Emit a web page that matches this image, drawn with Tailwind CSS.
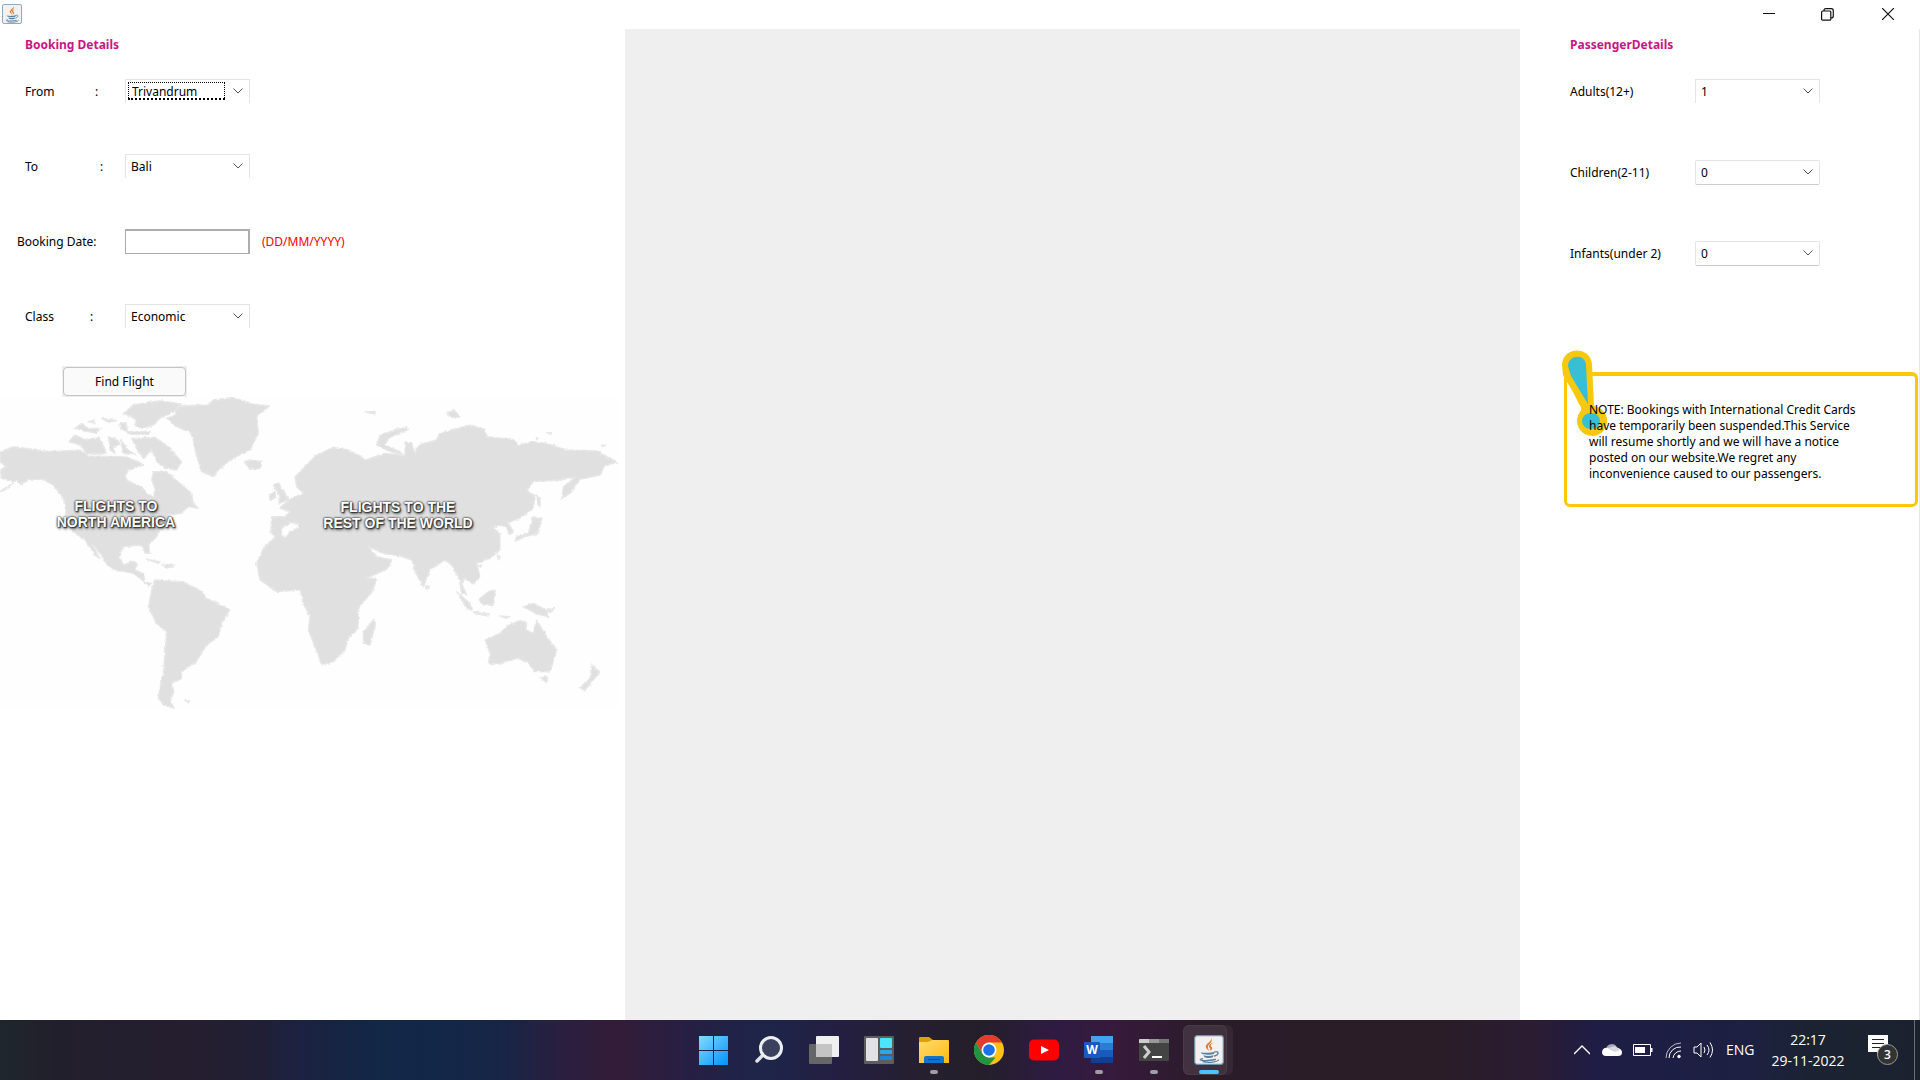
<!DOCTYPE html>
<html lang="en">
<head>
<meta charset="utf-8">
<title>Flight Booking</title>
<script src="https://cdn.jsdelivr.net/npm/@tailwindcss/browser@4"></script>
</head>
<body class="h-screen flex flex-col overflow-hidden bg-white text-black text-[12px] leading-4 font-['Noto_Sans','DejaVu_Sans',sans-serif]">

<svg class="hidden">
  <symbol id="java" viewBox="0 0 30 30">
    <rect x=".7" y=".7" width="28.6" height="28.6" rx="2.5" fill="#f1f1f1" stroke="#6f93ac" stroke-width="1.2"/>
    <path d="M17 3C18.500 7 9 9 12.500 13.500L15 16C14 12.500 13 11.500 15.500 9 17.500 7 18.500 6 17 3ZM20 7.500C14.500 9 14 11.500 16 13.200 16.700 14 16.500 15 15.500 16 20.500 14 17.500 12 16.800 11.200 16.200 10 18 8.500 20 7.500Z" fill="#e67a2e"/>
    <path d="M7 17C7.500 18.200 17 18 20.500 17L20 19C16 20 9 20 7.500 18.500ZM9.500 20.300C12 21.300 16 21.300 19.500 20.300L18.500 22.500C16 23.200 12 23.200 10.500 22.200Z" fill="#5b7f9d"/>
    <path d="M20.500 17C25.500 15.500 25 19.800 20.500 21M8.500 23.600C2 25 10 26.700 21.500 24.500M9 26.700C15 28 23 27.200 24.500 25" fill="none" stroke="#5b7f9d" stroke-width="1.300" stroke-linecap="round"/>
  </symbol>
  <symbol id="chev" viewBox="0 0 10 6"><path d="M.5.5 5 5 9.500.5" fill="none" stroke="#555" stroke-width="1"/></symbol>
</svg>

<header class="h-[29px] shrink-0 flex items-start justify-between">
  <svg class="w-5 h-5 mt-1 ml-0.5"><use href="#java"/></svg>
  <div class="flex h-7">
    <button aria-label="Minimize" class="w-[58px] grid place-items-center"><svg width="12" height="12"><path d="M0 5.500H12" stroke="#111"/></svg></button>
    <button aria-label="Restore" class="w-[58px] grid place-items-center"><svg width="13" height="13" fill="none" stroke="#111" stroke-width="1.200"><rect x=".6" y="3" width="9.200" height="9.200" rx="1"/><path d="M3 3V2Q3 .6 5 .6H10.400Q12.300.6 12.300 3V8Q12.300 10 10 10"/></svg></button>
    <button aria-label="Close" class="w-16 grid place-items-center"><svg width="12" height="12"><path d="M0 0 12 12M12 0 0 12" stroke="#111" stroke-width="1.200"/></svg></button>
  </div>
</header>

<main class="flex-1 min-h-0 grid grid-cols-[625px_1fr_400px]">
  <section>
    <form>
      <h2 class="font-bold text-[#c71585] pt-2 pl-[25px]">Booking Details</h2>
      <div class="pt-[26px] grid gap-y-[50px]">
        <div class="flex h-[25px] items-center">
          <label for="from" class="w-[125px] pl-[25px] flex"><span class="w-[70px]">From</span>:</label>
          <div class="relative w-[125px] h-6 self-start border border-b-0 border-[#e5e5e5]">
            <select id="from" class="appearance-none block w-full h-full pl-[6px] outline-none"><option>Trivandrum</option></select>
            <span class="absolute left-0.5 top-0.5 w-[97px] h-[18px] border border-b-2 border-dotted border-black pointer-events-none"></span>
            <svg class="absolute right-[6px] top-2 w-[10px] h-[6px] pointer-events-none"><use href="#chev"/></svg>
          </div>
        </div>
        <div class="flex h-[25px] items-center">
          <label for="to" class="w-[125px] pl-[25px] flex"><span class="w-[75px]">To</span>:</label>
          <div class="relative w-[125px] h-6 self-start border border-b-0 border-[#e5e5e5]">
            <select id="to" class="appearance-none block w-full h-full pl-[5px] outline-none"><option>Bali</option></select>
            <svg class="absolute right-[6px] top-2 w-[10px] h-[6px] pointer-events-none"><use href="#chev"/></svg>
          </div>
        </div>
        <div class="flex h-[25px] items-center">
          <label for="date" class="w-[125px] pl-[17px]">Booking Date:</label>
          <input id="date" type="text" class="w-[125px] h-[25px] border border-t-2 border-r-2 border-[#abadb3] px-1 outline-none">
          <span class="pl-3 text-[#ff0000]">(DD/MM/YYYY)</span>
        </div>
        <div class="flex h-[25px] items-center">
          <label for="class" class="w-[125px] pl-[25px] flex"><span class="w-[65px]">Class</span>:</label>
          <div class="relative w-[125px] h-6 self-start border border-b-0 border-[#e5e5e5]">
            <select id="class" class="appearance-none block w-full h-full pl-[5px] outline-none"><option>Economic</option></select>
            <svg class="absolute right-[6px] top-2 w-[10px] h-[6px] pointer-events-none"><use href="#chev"/></svg>
          </div>
        </div>
      </div>
      <div class="mt-[37px] ml-[62px] w-[125px] h-[31px] p-px bg-[#eee]">
        <button type="button" class="block w-full h-full rounded border border-[#c4c4c4] bg-[#fafafa]">Find Flight</button>
      </div>
    </form>
    <div class="relative w-[618px] h-[313px] bg-[#fefefe] font-bold text-sm leading-4 text-white text-center font-['Liberation_Sans',sans-serif]">
      <svg class="block w-full h-full" viewBox="0 21 1854 939" fill="#e0e0e0" stroke="#e8e8e8" stroke-width="4" stroke-linejoin="round">
        <filter id="coast" x="0" y="0" width="100%" height="100%"><feTurbulence type="fractalNoise" baseFrequency=".1" numOctaves="2" seed="4"/><feDisplacementMap in="SourceGraphic" scale="9" xChannelSelector="R" yChannelSelector="G"/></filter>
        <g filter="url(#coast)">
        <path d="M0 185 40 170 150 185 240 180 265 198 375 200 415 215 430 225 385 240 375 260 385 275 425 290 440 310 460 320 465 295 455 270 460 245 500 245 545 285 575 310 580 340 595 355 565 350 545 370 500 375 520 385 480 410 470 440 445 465 450 490 435 490 425 465 370 470 358 500 370 525 395 515 412 520 405 540 430 550 435 575 455 580 445 588 420 565 400 550 340 538 318 520 300 490 275 460 300 505 285 495 255 450 220 425 200 380 190 325 160 285 130 268 85 268 60 285 50 270 15 300 0 305 30 285 40 275 5 265 0 240 18 230 0 215Z"/>
        <path d="M465 570 550 575 605 605 620 625 690 658 665 700 655 740 620 765 590 815 545 845 545 865 515 880 522 905 510 935 525 955 490 945 475 925 480 890 490 850 500 725 468 700 445 650 455 600Z"/>
        <path d="M500 85 525 75 530 48 625 45 640 30 700 22 755 42 808 48 770 80 775 130 750 180 690 210 655 240 640 260 605 245 590 200 575 130 530 110Z"/>
        <path d="M370 70 400 45 480 32 545 42 520 65 480 85 460 105 430 115 408 110 405 85ZM395 145 465 142 500 165 545 215 530 240 500 235 470 215 455 180 430 205 410 175ZM205 155 225 135 255 148 300 143 320 190 260 192 240 165ZM225 115 245 100 265 115 300 115 290 130 250 122ZM325 140 355 150 360 165 340 170 345 190 330 180ZM362 150 385 180 410 195 370 190ZM305 85 350 92 325 98ZM380 125 450 125 445 133 385 133ZM265 95 285 90 285 100ZM360 100 378 98 383 125 362 118Z"/>
        <path d="M733 215 750 210 785 215 780 235 750 238ZM820 285 835 278 855 310 865 330 835 342 840 320ZM808 315 825 305 828 325 810 330ZM440 508 480 515 475 520ZM485 522 525 526 500 535ZM555 930 568 932 565 938Z"/>
        <path d="M840 355 865 330 910 310 890 290 885 260 950 195 1000 172 1040 178 1085 200 1095 210 1155 190 1215 195 1215 155 1235 160 1245 190 1255 165 1310 150 1320 130 1410 105 1455 118 1460 140 1540 148 1555 165 1600 155 1640 160 1700 180 1790 183 1854 218 1815 225 1800 255 1740 268 1710 310 1685 328 1690 290 1725 262 1680 270 1600 275 1582 300 1605 320 1600 355 1560 385 1525 398 1540 425 1530 435 1518 410 1495 405 1480 415 1500 430 1500 480 1470 505 1430 520 1440 560 1420 582 1395 565 1385 580 1400 615 1385 610 1378 570 1355 525 1335 510 1290 540 1270 590 1245 545 1235 510 1200 498 1150 490 1105 470 1130 500 1175 510 1165 535 1100 565 1130 565 1120 600 1075 655 1075 715 1045 745 1035 780 1000 815 965 825 955 795 925 720 930 680 910 640 900 600 830 605 780 570 770 520 790 475 825 440 812 425 815 380 855 380 870 365ZM845 415 870 398 895 400 895 415 870 425 860 440 845 438Z" fill-rule="evenodd"/>
        <path d="M1090 760 1090 725 1120 690 1127 700 1110 765ZM1130 165 1140 135 1220 110 1225 118 1165 145 1155 165 1200 185 1215 198 1160 180ZM1340 70 1360 58 1382 82 1355 82ZM1095 66 1125 64 1125 72ZM1610 315 1620 330 1620 350 1614 345ZM1640 128 1655 128 1652 132ZM1605 143 1615 145 1610 148ZM1805 165 1816 167 1810 170ZM1600 380 1625 385 1615 430 1575 440 1545 455 1550 440 1585 430ZM1275 585 1288 590 1282 600ZM1370 605 1410 640 1415 662 1400 655ZM1435 630 1465 605 1485 600 1480 645 1450 645ZM1420 665 1468 672 1465 678 1425 670ZM1570 650 1600 640 1640 660 1645 680 1610 672ZM1500 678 1530 680 1515 685ZM1492 495 1500 500 1495 512ZM1435 527 1445 525 1440 532ZM1640 660 1665 655 1650 668Z"/>
        <path d="M1455 750 1500 730 1525 705 1560 692 1580 700 1578 720 1600 730 1610 690 1640 740 1670 780 1650 845 1605 845 1580 815 1550 805 1500 822 1465 820 1470 790ZM1620 862 1642 860 1640 878ZM1775 825 1800 845 1780 870 1755 900 1740 895 1770 865Z"/>
        </g>
      </svg>
      <a href="#north-america" class="absolute left-[55px] top-[101px] w-[122px] [text-shadow:0_0_2px_#222,0_0_2px_#333,1px_1px_1px_#444,1px_2px_3px_#555]">FLIGHTS TO<br>NORTH AMERICA</a>
      <a href="#world" class="absolute left-[317px] top-[102px] w-[162px] [text-shadow:0_0_2px_#222,0_0_2px_#333,1px_1px_1px_#444,1px_2px_3px_#555]">FLIGHTS TO THE<br>REST OF THE WORLD</a>
    </div>
  </section>

  <section class="bg-[#efefef]" aria-label="Flights"></section>

  <section class="border-r border-[#e8e8e8]">
    <h2 class="font-bold text-[#c71585] pt-2 pl-[50px]">PassengerDetails</h2>
    <div class="pt-[26px] pl-[50px] grid gap-y-14">
      <div class="flex h-[25px] items-center">
        <label for="adults" class="w-[125px]">Adults(12+)</label>
        <div class="relative w-[125px] h-6 self-start border border-b-0 border-[#e5e5e5]">
          <select id="adults" class="appearance-none block w-full h-full pl-[5px] outline-none"><option>1</option></select>
          <svg class="absolute right-[6px] top-2 w-[10px] h-[6px] pointer-events-none"><use href="#chev"/></svg>
        </div>
      </div>
      <div class="flex h-[25px] items-center">
        <label for="children" class="w-[125px]">Children(2-11)</label>
        <div class="relative w-[125px] h-[25px] rounded-[2px] border border-[#e5e5e5] border-b-[#ccc]">
          <select id="children" class="appearance-none block w-full h-full pl-[5px] outline-none"><option>0</option></select>
          <svg class="absolute right-[6px] top-2 w-[10px] h-[6px] pointer-events-none"><use href="#chev"/></svg>
        </div>
      </div>
      <div class="flex h-[25px] items-center">
        <label for="infants" class="w-[125px]">Infants(under 2)</label>
        <div class="relative w-[125px] h-[25px] rounded-[2px] border border-[#e5e5e5] border-b-[#ccc]">
          <select id="infants" class="appearance-none block w-full h-full pl-[5px] outline-none"><option>0</option></select>
          <svg class="absolute right-[6px] top-2 w-[10px] h-[6px] pointer-events-none"><use href="#chev"/></svg>
        </div>
      </div>
    </div>
    <aside class="relative mt-[106px] ml-[44px] mr-px h-[135px] rounded-md border-[3px] border-t-4 border-[#f7c80c] pt-[26px] pl-[22px]">
      <svg class="absolute -left-1.5 -top-[26px] w-[46px] h-[87px]" viewBox="0 0 46 87">
        <path d="M1 15C2-4 29-4 31 14L33 56A15 15 0 1 1 19 62Q22 58 18 54L12 42 2 25Z" fill="#f7c80c"/>
        <path d="M7 16C7 5 24 3 25 15L27 54 10 26Z" fill="#38bfd5"/>
        <ellipse cx="30" cy="71" rx="9" ry="8" fill="#38bfd5"/>
      </svg>
      <p class="relative">NOTE: Bookings with International Credit Cards<br>have temporarily been suspended.This Service<br>will resume shortly and we will have a notice<br>posted on our website.We regret any<br>inconvenience caused to our passengers.</p>
    </aside>
  </section>
</main>

<footer class="relative h-[60px] shrink-0 flex justify-center text-white font-['Open_Sans',sans-serif] bg-[linear-gradient(90deg,#1e262d_0%,#221f2c_3%,#241e2f_10%,#211f35_13.5%,#1e2140_15%,#132645_19%,#122748_22%,#162546_26%,#291f40_29%,#331c38_32%,#252045_36.5%,#1d2549_40%,#241f42_43.5%,#251f2f_48%,#231f2a_51%,#2f1b42_55%,#371a3c_58%,#2a1c28_63%,#2a1d27_75%,#2b1c33_80%,#1f1d45_83%,#1d2042_91%,#1b2333_94%,#1b222e_100%)]">
  <nav class="flex pl-0.5">
    <button aria-label="Start" class="w-[55px] grid place-items-center"><svg width="30" height="30"><defs><linearGradient id="wg" gradientUnits="userSpaceOnUse" x1="0" y1="0" x2="30" y2="30"><stop offset="0" stop-color="#83dcff"/><stop offset="1" stop-color="#0091fa"/></linearGradient></defs><path d="M0 1H14V15H0ZM15 1H29V15H15ZM0 16H14V30H0ZM15 16H29V30H15Z" fill="url(#wg)"/></svg></button>
    <button aria-label="Search" class="w-[55px] grid place-items-center"><svg width="30" height="30" fill="none"><path d="M9 20 3 26" stroke="#dfe3e6" stroke-width="3.500" stroke-linecap="round"/><circle cx="17" cy="13" r="10.500" fill="#3d4160" stroke="#eceff1" stroke-width="3"/></svg></button>
    <button aria-label="Task view" class="w-[55px] grid place-items-center"><svg width="30" height="30"><rect y="9" width="23" height="20" rx="1" fill="#666"/><rect x="7" y="1" width="23" height="21" rx="1" fill="#f0f0f0"/><rect x="7" y="9" width="16" height="13" fill="#c4c4c4"/></svg></button>
    <button aria-label="Widgets" class="w-[55px] grid place-items-center"><svg width="30" height="30"><rect y="1" width="30" height="28" rx="1" fill="#5d5d5d"/><rect x="2" y="3" width="12" height="23" rx="1" fill="#e2e2e6"/><rect x="16" y="3" width="12" height="10" rx="1" fill="#4de4ff"/><rect x="16" y="15" width="12" height="4" rx="1" fill="#29a9e8"/><rect x="16" y="21" width="12" height="4" rx="1" fill="#1c86d8"/></svg></button>
    <button aria-label="File Explorer" class="relative w-[55px] grid place-items-center"><svg width="30" height="30"><defs><linearGradient id="fg" x1="0" y1="0" x2="1" y2="1"><stop offset="0" stop-color="#ffdd6c"/><stop offset="1" stop-color="#fdb913"/></linearGradient></defs><path d="M0 3Q0 2 1 2H10L14 5V10H0Z" fill="#dfa00b"/><path d="M0 7H9L13 5H29Q30 5 30 6V28H0Z" fill="url(#fg)"/><path d="M5 28V23Q5 21 7 21H23Q25 21 25 23V28Z" fill="#1173cb"/><path d="M9 24.500H21" stroke="#0b4f96"/></svg><span class="absolute bottom-1.5 w-2 h-1 rounded-full bg-[#a09ca6]"></span></button>
    <button aria-label="Chrome" class="w-[55px] grid place-items-center"><svg width="30" height="30" viewBox="0 0 30 30"><circle cx="15" cy="15" r="15" fill="#fbc116"/><path d="M15 15 8.500 18.700 2 7.500A15 15 0 0 1 28 7.500H15Z" fill="#e33b2e"/><path d="M2 7.500 8.500 18.700 15 22.500H21.500L15 30A15 15 0 0 1 2 7.500Z" fill="#229342"/><circle cx="15" cy="15" r="7.500" fill="#fff"/><circle cx="15" cy="15" r="5.800" fill="#1a73e8"/></svg></button>
    <button aria-label="YouTube" class="w-[55px] grid place-items-center"><svg width="30" height="22"><rect width="30" height="21" y=".5" rx="5" fill="#f00"/><path d="M12 7 20 11 12 15Z" fill="#fff"/></svg></button>
    <button aria-label="Word" class="relative w-[55px] grid place-items-center"><svg width="30" height="30"><path d="M7 1H29V8H7Z" fill="#41a5ee"/><path d="M7 8H29V15H7Z" fill="#2b7cd3"/><path d="M7 15H29V22H7Z" fill="#185abd"/><path d="M7 22H29V28H7Z" fill="#103f91"/><rect y="7" width="16" height="16" rx="1" fill="#185abd"/><text x="8" y="19" text-anchor="middle" font-size="12" font-weight="700" fill="#fff">W</text></svg><span class="absolute bottom-1.5 w-2 h-1 rounded-full bg-[#a09ca6]"></span></button>
    <button aria-label="Terminal" class="relative w-[55px] grid place-items-center"><svg width="30" height="22"><rect width="30" height="22" rx="1" fill="#444"/><path d="M0 1Q0 0 1 0H10V4H0Z" fill="#ccc"/><path d="M10 0H20V4H10Z" fill="#999"/><path d="M20 0H30V4H20Z" fill="#777"/><path d="M5 7 10 13 5 19" fill="none" stroke="#ccc" stroke-width="3"/><path d="M13 17H23V19H13Z" fill="#fff"/></svg><span class="absolute bottom-1.5 w-2 h-1 rounded-full bg-[#a09ca6]"></span></button>
    <button aria-label="Java" class="relative w-[55px] grid place-items-center"><span class="absolute left-0.5 top-[5px] w-[50px] h-[50px] rounded-md bg-white/5"></span><span class="absolute left-0.5 top-[5px] w-11 h-[50px] rounded-md border border-white/5 bg-white/5"></span><svg class="relative w-[30px] h-[30px]"><use href="#java"/></svg><span class="absolute bottom-1.5 w-5 h-1 rounded-full bg-[#4cc2ff]"></span></button>
  </nav>
  <div class="absolute right-0 top-0 h-full flex items-center">
    <button aria-label="Hidden icons" class="mr-3"><svg width="16" height="10" fill="none" stroke="#fff" stroke-width="1.300"><path d="M0 9 8 1 16 9"/></svg></button>
    <svg class="mr-[11px]" width="20" height="14" aria-label="OneDrive"><path d="M4 6A6 6 0 0 1 15 4L18 7 10 12Z" fill="#a5a8b8"/><path d="M0 9Q1 4 6 5L11 8 16 5Q20 6 20 9.500 20 13 16 13H4Q0 13 0 9Z" fill="#fff"/><path d="M6 5 13 9 18 7 13 3Z" fill="#d6d8e0"/></svg>
    <svg class="mr-3" width="20" height="12" aria-label="Battery"><path d="M.5.5H17.500V11.500H.5Z" fill="none" stroke="#fff"/><path d="M2 3H12V9H2ZM18 4H19.500V8H18Z" fill="#fff"/></svg>
    <svg class="mr-3" width="16" height="17" fill="none" stroke="#fff" aria-label="Wi-Fi"><path d="M1 16A15 15 0 0 1 16 1" opacity=".7"/><path d="M4 16A11 11 0 0 1 16 5M8 16A8 8 0 0 1 16 9"/><circle cx="14" cy="14.500" r="1.300" fill="#fff"/></svg>
    <svg class="mr-3" width="21" height="18" fill="none" stroke="#fff" aria-label="Volume"><path d="M1 6H4L8 2V16L4 12H1ZM11 6Q13 9 11 12M14 4Q18 9 14 14M17 1.500Q22 9 17 16.500"/></svg>
    <span class="w-[30px] mr-3 text-sm">ENG</span>
    <time class="w-[80px] mr-5 text-sm leading-[21px] text-center whitespace-nowrap">22:17<br>29-11-2022</time>
    <button aria-label="Notifications" class="relative w-[30px] h-[30px] mr-4"><svg width="30" height="30"><path d="M0 0H20V17H13L9 21V17H0Z" fill="#fff"/><path d="M4 4.500H16M4 8.500H16M4 12.500H16" stroke="#1b2333"/><circle cx="19.500" cy="19.500" r="10" fill="#333" stroke="#999"/></svg><span class="absolute left-[9px] top-[9px] w-[21px] text-center text-xs leading-[21px] font-semibold">3</span></button>
    <span class="w-px h-full mr-[5px] bg-[#6b7078]"></span>
  </div>
</footer>
</body>
</html>
